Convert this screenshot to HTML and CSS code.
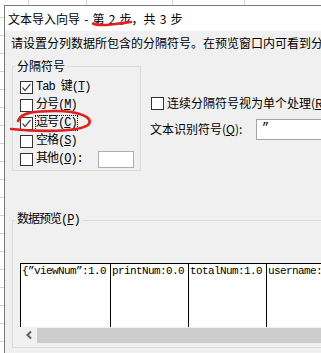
FILE: index.html
```html
<!DOCTYPE html>
<html lang="zh-CN">
<head>
    <meta charset="UTF-8">
    <title>文本导入向导</title>
    <link rel="stylesheet" href="styles.css">
</head>
<body>
    <div class="sheet">
        <div class="dialog">
            <div class="titlebar">文本导入向导 - 第 2 步，共 3 步</div>
            <p class="intro">请设置分列数据所包含的分隔符号。在预览窗口内可看到分列的效果。</p>

            <div class="row">
                <fieldset class="delims">
                    <legend>分隔符号</legend>
                    <div class="check-row">
                        <span class="box checked"><svg width="11" height="11" viewBox="0 0 11 11"><polyline points="1.5,5.5 4,8.5 9.5,2" /></svg></span>
                        <span class="lbl">Tab 键(<u>T</u>)</span>
                    </div>
                    <div class="check-row">
                        <span class="box"></span>
                        <span class="lbl">分号(<u>M</u>)</span>
                    </div>
                    <div class="check-row">
                        <span class="box checked"><svg width="11" height="11" viewBox="0 0 11 11"><polyline points="1.5,5.5 4,8.5 9.5,2" /></svg></span>
                        <span class="lbl focused">逗号(<u>C</u>)</span>
                    </div>
                    <div class="check-row">
                        <span class="box"></span>
                        <span class="lbl">空格(<u>S</u>)</span>
                    </div>
                    <div class="check-row">
                        <span class="box"></span>
                        <span class="lbl">其他(<u>O</u>):</span>
                        <span class="other-input"></span>
                    </div>
                </fieldset>

                <div class="opts">
                    <div class="check-row">
                        <span class="box"></span>
                        <span class="opt-lbl">连续分隔符号视为单个处理(<u>R</u>)</span>
                    </div>
                    <div class="qualifier">
                        <span class="opt-lbl q-lbl">文本识别符号(<u>Q</u>):</span>
                        <span class="combo">”</span>
                    </div>
                </div>
            </div>

            <fieldset class="preview">
                <legend>数据预览(<u>P</u>)</legend>
                <div class="grid">
                    <div class="col col-first">{”viewNum”:1.0</div>
                    <div class="col">printNum:0.0</div>
                    <div class="col">totalNum:1.0</div>
                    <div class="col">username:</div>
                </div>
                <div class="hscroll">
                    <span class="arrow"><svg width="8" height="10" viewBox="0 0 8 10"><polyline points="6,1.5 2.5,5 6,8.5" /></svg></span>
                    <span class="thumb"></span>
                </div>
            </fieldset>
        </div>

        <!-- red pen marks drawn over the screenshot -->
        <svg class="marks" width="321" height="353" viewBox="0 0 321 353">
            <path d="M93,23.5 Q98,26 111,24.5 T131,22" />
            <path d="M11,129 C40,132 78,132 88,125 C95,118 80,111 55,111 C36,111 21,112 18,121" />
        </svg>
    </div>
</body>
</html>
```

FILE: styles.css
```css
*{
    box-sizing: border-box;
}

body{
    margin: 0;
    width: 321px;
    height: 353px;
    overflow: hidden;
    background-color: #ffffff;
    font-family: "Noto Sans CJK SC", sans-serif;
    font-size: 12px;
    color: #000000;
}

u{
    text-decoration-thickness: 1px;
    text-underline-offset: 1px;
}

.sheet{
    position: relative;
    height: 353px;
    padding: 5px 0 0 4px;
    background:
        linear-gradient(#d4d4d4, #d4d4d4) 28px 0 / 1px 5px no-repeat,
        linear-gradient(#d4d4d4, #d4d4d4) 86px 0 / 1px 5px no-repeat,
        linear-gradient(#d4d4d4, #d4d4d4) 172px 0 / 1px 5px no-repeat,
        linear-gradient(#d4d4d4, #d4d4d4) 244px 0 / 1px 5px no-repeat,
        repeating-linear-gradient(to bottom, transparent 0 17px, #d4d4d4 17px 18px) 0 0 / 4px 100% no-repeat,
        #ffffff;
}

.dialog{
    height: 348px;
    overflow: hidden;
    border-top: 1px solid #7a7a7a;
    border-left: 1px solid #7a7a7a;
    background-color: #f0f0f0;
}

.titlebar{
    height: 25px;
    line-height: 25px;
    padding-left: 3px;
    background-color: #ffffff;
    word-spacing: 1.5px;
    white-space: nowrap;
}

.intro{
    margin: 0;
    padding: 4px 0 0 6px;
    line-height: 16px;
    white-space: nowrap;
}

.row{
    display: flex;
    margin-top: 8px;
}

fieldset{
    margin: 0;
    border: 1px solid #dcdcdc;
}

legend{
    margin-left: -5px;
    padding: 0 2px;
    line-height: 14px;
}

legend,
.lbl,
.col{
    font-family: "Liberation Mono", "Noto Sans CJK SC", monospace;
    letter-spacing: -1px;
}

.delims{
    width: 129px;
    flex-shrink: 0;
    margin-left: 7px;
    padding: 5px 6px 2px 7px;
}

.delims legend{
    font-family: "Noto Sans CJK SC", sans-serif;
    letter-spacing: 0;
}

.check-row{
    display: flex;
    align-items: center;
    height: 18px;
}

.box{
    display: flex;
    align-items: center;
    justify-content: center;
    width: 13px;
    height: 13px;
    flex-shrink: 0;
    border: 1px solid #333333;
    background-color: #ffffff;
}

.box polyline{
    fill: none;
    stroke: #4d4d4d;
    stroke-width: 1.2;
}

.lbl{
    margin-left: 3px;
    line-height: 14px;
    white-space: nowrap;
}

.focused{
    outline: 1px dotted #000000;
    outline-offset: 0;
}

.other-input{
    width: 36px;
    height: 17px;
    margin-left: auto;
    border: 1px solid #abadb3;
    background-color: #ffffff;
}

.opts{
    padding: 35px 0 0 10px;
    white-space: nowrap;
}

.opt-lbl{
    margin-left: 3px;
    line-height: 16px;
}

.qualifier{
    display: flex;
    align-items: center;
    height: 22px;
    margin-top: 6px;
}

.q-lbl{
    width: 106px;
    margin-left: -1px;
}

.combo{
    width: 80px;
    height: 21px;
    padding: 1px 0 0 5px;
    border: 1px solid #a5a5a5;
    background-color: #ffffff;
    font-family: "Liberation Mono", monospace;
    line-height: 14px;
}

.preview{
    width: 330px;
    height: 135px;
    margin: 42px 0 0 7px;
    padding: 36px 0 4px 7px;
}

.grid{
    display: flex;
    height: 64px;
    border-top: 1px solid #000000;
    background-color: #ffffff;
}

.col{
    width: 78px;
    flex-shrink: 0;
    padding: 1px 0 0 1px;
    border-left: 1px solid #000000;
    font-size: 11px;
    letter-spacing: -0.6px;
    line-height: 13px;
    white-space: nowrap;
}

.col-first{
    width: 90px;
}

.hscroll{
    display: flex;
    height: 16px;
}

.arrow{
    display: flex;
    align-items: center;
    justify-content: center;
    width: 17px;
    background-color: #f0f0f0;
}

.arrow polyline{
    fill: none;
    stroke: #606060;
    stroke-width: 2;
}

.thumb{
    flex: 1;
    margin-top: 1px;
    background-color: #cdcdcd;
}

.marks{
    position: absolute;
    top: 0;
    left: 0;
    pointer-events: none;
}

.marks path{
    fill: none;
    stroke: #e0201c;
    stroke-width: 2.6;
    stroke-linecap: round;
}
```
